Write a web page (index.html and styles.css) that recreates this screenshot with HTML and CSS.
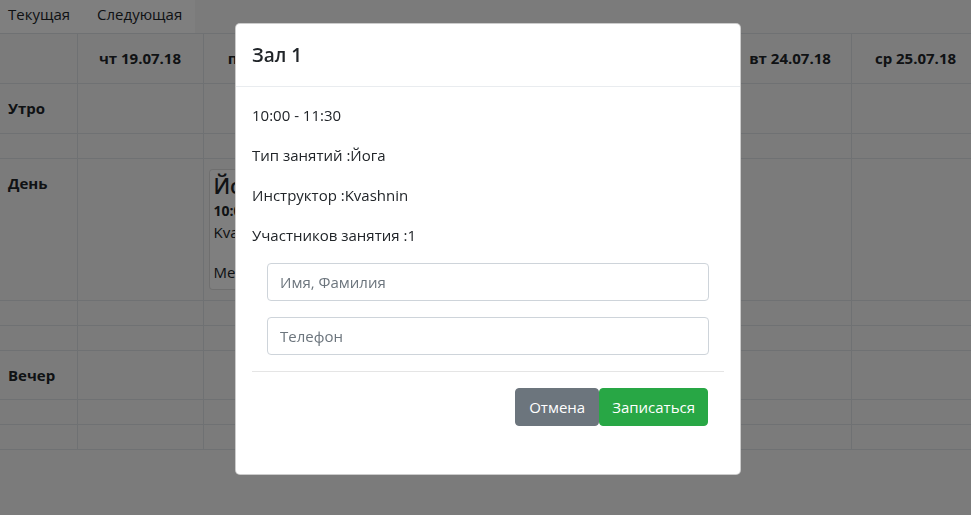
FILE: index.html
```html
<!DOCTYPE html>
<html lang="ru">
<head>
<meta charset="utf-8">
<title>Расписание</title>
<link rel="stylesheet" href="styles.css">
</head>
<body>
<div class="page">
  <nav class="tabs">
    <a class="tab" href="#">Текущая</a>
    <a class="tab" href="#">Следующая</a>
  </nav>
  <table class="schedule">
    <colgroup>
      <col class="c-label"><col class="c-thu"><col class="c-mid"><col class="c-mid"><col class="c-mid"><col class="c-mid"><col class="c-tue"><col class="c-wed">
    </colgroup>
    <thead>
      <tr class="r-head">
        <th></th><th>чт 19.07.18</th><th>пт 20.07.18</th><th>сб 21.07.18</th><th>вс 22.07.18</th><th>пн 23.07.18</th><th>вт 24.07.18</th><th>ср 25.07.18</th>
      </tr>
    </thead>
    <tbody>
      <tr class="r-main"><td class="label">Утро</td><td></td><td></td><td></td><td></td><td></td><td></td><td></td></tr>
      <tr class="r-sub"><td></td><td></td><td></td><td></td><td></td><td></td><td></td><td></td></tr>
      <tr class="r-day"><td class="label">День</td><td></td>
        <td class="card-cell">
          <div class="card">
            <div class="card-title">Йога</div>
            <div class="card-time">10:00 - 11:30</div>
            <div class="card-line">Kvashnin</div>
            <div class="card-line"></div>
            <div class="card-line">Мест: 19</div>
          </div>
        </td>
        <td></td><td></td><td></td><td></td><td></td></tr>
      <tr class="r-sub"><td></td><td></td><td></td><td></td><td></td><td></td><td></td><td></td></tr>
      <tr class="r-sub"><td></td><td></td><td></td><td></td><td></td><td></td><td></td><td></td></tr>
      <tr class="r-evening"><td class="label">Вечер</td><td></td><td></td><td></td><td></td><td></td><td></td><td></td></tr>
      <tr class="r-sub"><td></td><td></td><td></td><td></td><td></td><td></td><td></td><td></td></tr>
      <tr class="r-sub"><td></td><td></td><td></td><td></td><td></td><td></td><td></td><td></td></tr>
    </tbody>
  </table>
</div>

<div class="backdrop"></div>

<div class="modal">
  <div class="modal-content">
    <div class="modal-header">
      <h5 class="modal-title">Зал 1</h5>
    </div>
    <div class="modal-body">
      <p>10:00 - 11:30</p>
      <p>Тип занятий :Йога</p>
      <p>Инструктор :Kvashnin</p>
      <p>Участников занятия :1</p>
      <form class="signup">
        <div class="form-group"><input class="form-control" type="text" placeholder="Имя, Фамилия"></div>
        <div class="form-group"><input class="form-control" type="text" placeholder="Телефон"></div>
      </form>
      <hr class="divider">
      <div class="actions">
        <button class="btn btn-secondary" type="button">Отмена</button>
        <button class="btn btn-success" type="button">Записаться</button>
      </div>
    </div>
  </div>
</div>
</body>
</html>
```
FILE: styles.css
```css
* { box-sizing: border-box; }
html, body { margin: 0; padding: 0; overflow: hidden; }
body {
  font-family: "Open Sans", "Liberation Sans", sans-serif;
  font-size: 15px;
  line-height: 24px;
  color: #212529;
  background: #f7f7f7;
  width: 971px;
  height: 515px;
}
.page { width: 980px; }

.tabs {
  display: flex;
  gap: 27px;
  width: 195px;
  height: 33px;
  padding: 2px 0 0 8px;
  background: #ffffff;
}
.tab { color: #212529; text-decoration: none; line-height: 24px; }

.schedule {
  border-collapse: collapse;
  width: 980px;
  table-layout: fixed;
}
.c-label { width: 77px; }
.c-thu { width: 126px; }
.c-mid { width: 131.5px; }
.c-tue { width: 122px; }
.c-wed { width: 129px; }
.schedule th, .schedule td {
  border: 1px solid #dee2e6;
  padding: 12px 8px 12px;
  vertical-align: top;
  line-height: 24px;
}
.schedule tr > :first-child { border-left: 0; }
.schedule th { font-weight: 700; text-align: center; }
.r-head th { height: 50px; }
.r-main td { height: 50px; }
.r-evening td { height: 49px; }
.r-sub td { height: 25px; padding: 0; }
.r-day td { height: 142px; }
.label { font-weight: 700; padding-left: 8px !important; text-align: left; }

.card-cell { padding: 10px 5px !important; }
.card {
  border: 1px solid rgba(0,0,0,.125);
  border-radius: 4px;
  background: #fff;
  padding: 2px 4px 6px;
  height: 121px;
  overflow: hidden;
  white-space: nowrap;
}
.card-title { font-size: 21px; line-height: 28px; font-weight: 600; }
.card-time { font-weight: 700; font-size: 14px; line-height: 22px; }
.card-line { font-size: 15px; line-height: 20px; height: 20px; }

.backdrop {
  position: fixed;
  inset: 0;
  background: rgba(0,0,0,.5);
}

.modal {
  position: fixed;
  top: 23px;
  left: 235px;
  width: 506px;
}
.modal-content {
  background: #fff;
  border: 1px solid rgba(0,0,0,.2);
  border-radius: 5px;
}
.modal-header {
  padding: 16px 16px 15px;
  border-bottom: 1px solid #e9ecef;
}
.modal-title {
  margin: 0;
  font-size: 19px;
  line-height: 31px;
  font-weight: 600;
}
.modal-body { padding: 16px; }
.modal-body p { margin: 0 0 16px; }

.signup { margin: 0 15px 0 15px; }
.form-group { margin-bottom: 16px; }
.form-control {
  display: block;
  width: 100%;
  height: 38px;
  padding: 6px 12px;
  font: inherit;
  font-size: 15px;
  color: #495057;
  border: 1px solid #ced4da;
  border-radius: 4px;
  background: #fff;
}
.form-control::placeholder { color: #6c757d; opacity: 1; }

.divider {
  margin: 16px 0;
  border: 0;
  border-top: 1px solid rgba(0,0,0,.1);
}
.actions {
  display: flex;
  justify-content: flex-end;
  padding-right: 16px;
  margin-bottom: 32px;
}
.btn {
  height: 38px;
  padding: 6px 12px;
  font: inherit;
  font-size: 15px;
  color: #fff;
  border: 1px solid transparent;
  border-radius: 4px;
  cursor: pointer;
}
.btn-secondary { background: #6c757d; border-color: #6c757d; padding: 6px 13px; }
.btn-success { background: #28a745; border-color: #28a745; }
```
